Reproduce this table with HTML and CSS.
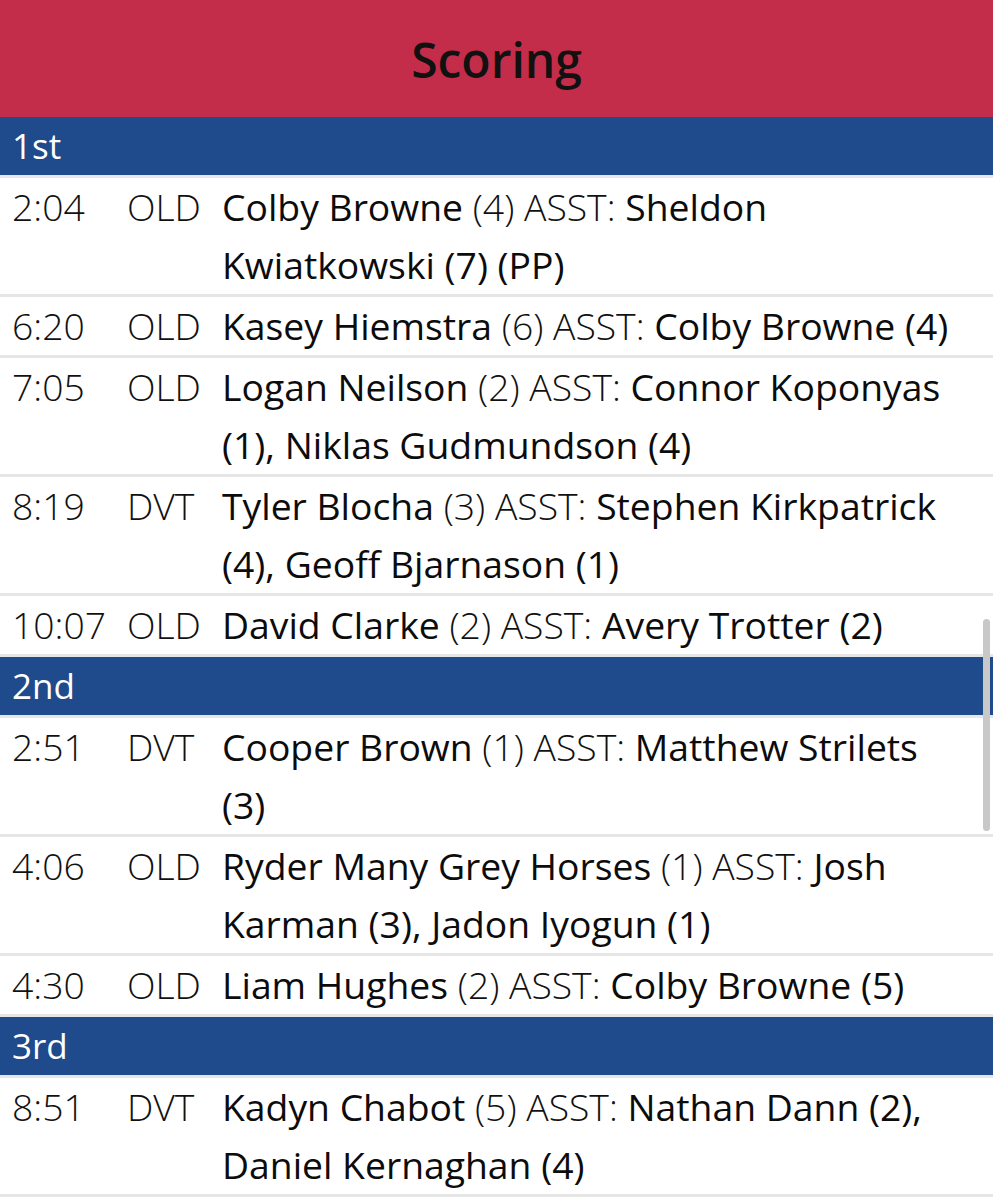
FILE: index.html
```html
<!DOCTYPE html>
<html>
<head>
<meta charset="utf-8">
<link rel="stylesheet" href="styles.css">
</head>
<body>
<div class="page">
  <header class="title">Scoring</header>

  <div class="period">1st</div>
  <div class="row"><span class="time">2:04</span><span class="team">OLD</span><span class="desc"><b>Colby Browne</b> (4) ASST: <b>Sheldon Kwiatkowski (7)</b> <b>(PP)</b></span></div>
  <div class="row"><span class="time">6:20</span><span class="team">OLD</span><span class="desc"><b>Kasey Hiemstra</b> (6) ASST: <b>Colby Browne (4)</b></span></div>
  <div class="row"><span class="time">7:05</span><span class="team">OLD</span><span class="desc"><b>Logan Neilson</b> (2) ASST: <b>Connor Koponyas (1), Niklas Gudmundson (4)</b></span></div>
  <div class="row"><span class="time">8:19</span><span class="team">DVT</span><span class="desc"><b>Tyler Blocha</b> (3) ASST: <b>Stephen Kirkpatrick (4), Geoff Bjarnason (1)</b></span></div>
  <div class="row"><span class="time">10:07</span><span class="team">OLD</span><span class="desc"><b>David Clarke</b> (2) ASST: <b>Avery Trotter (2)</b></span></div>

  <div class="period">2nd</div>
  <div class="row"><span class="time">2:51</span><span class="team">DVT</span><span class="desc"><b>Cooper Brown</b> (1) ASST: <b>Matthew Strilets (3)</b></span></div>
  <div class="row"><span class="time">4:06</span><span class="team">OLD</span><span class="desc"><b>Ryder Many Grey Horses</b> (1) ASST: <b>Josh Karman (3), Jadon Iyogun (1)</b></span></div>
  <div class="row"><span class="time">4:30</span><span class="team">OLD</span><span class="desc"><b>Liam Hughes</b> (2) ASST: <b>Colby Browne (5)</b></span></div>

  <div class="period">3rd</div>
  <div class="row"><span class="time">8:51</span><span class="team">DVT</span><span class="desc"><b>Kadyn Chabot</b> (5) ASST: <b>Nathan Dann (2), Daniel Kernaghan (4)</b></span></div>

  <div class="scroll-thumb"></div>
</div>
</body>
</html>
```
FILE: styles.css
```css
* { box-sizing: border-box; }
html, body { margin: 0; padding: 0; background: #fff; }
body { font-family: "Open Sans", "Liberation Sans", sans-serif; color: #111; }
.page { position: relative; width: 993px; }
.title {
  background: #c32d4a;
  height: 117px;
  display: flex;
  align-items: center;
  justify-content: center;
  font-size: 48px;
  font-weight: 600;
  color: #111;
  padding-top: 2px;
}
.period {
  background: #1f4a8b;
  color: #fff;
  height: 61px;
  line-height: 58px;
  font-size: 35px;
  padding-left: 12px;
  border-bottom: 3px solid #e4e8ed;
}
.row {
  display: grid;
  grid-template-columns: 115px 95px 1fr;
  padding-left: 12px;
  padding-right: 30px;
  font-size: 37.3px;
  line-height: 58px;
  font-weight: 300;
  border-bottom: 3px solid #e6e6e6;
  color: #111;
}
.desc b { font-weight: 400; color: #0c0c0c; }
.scroll-thumb {
  position: absolute;
  right: 3px;
  top: 619px;
  width: 7px;
  height: 212px;
  border-radius: 4px;
  background: #c8c8c8;
}
```
